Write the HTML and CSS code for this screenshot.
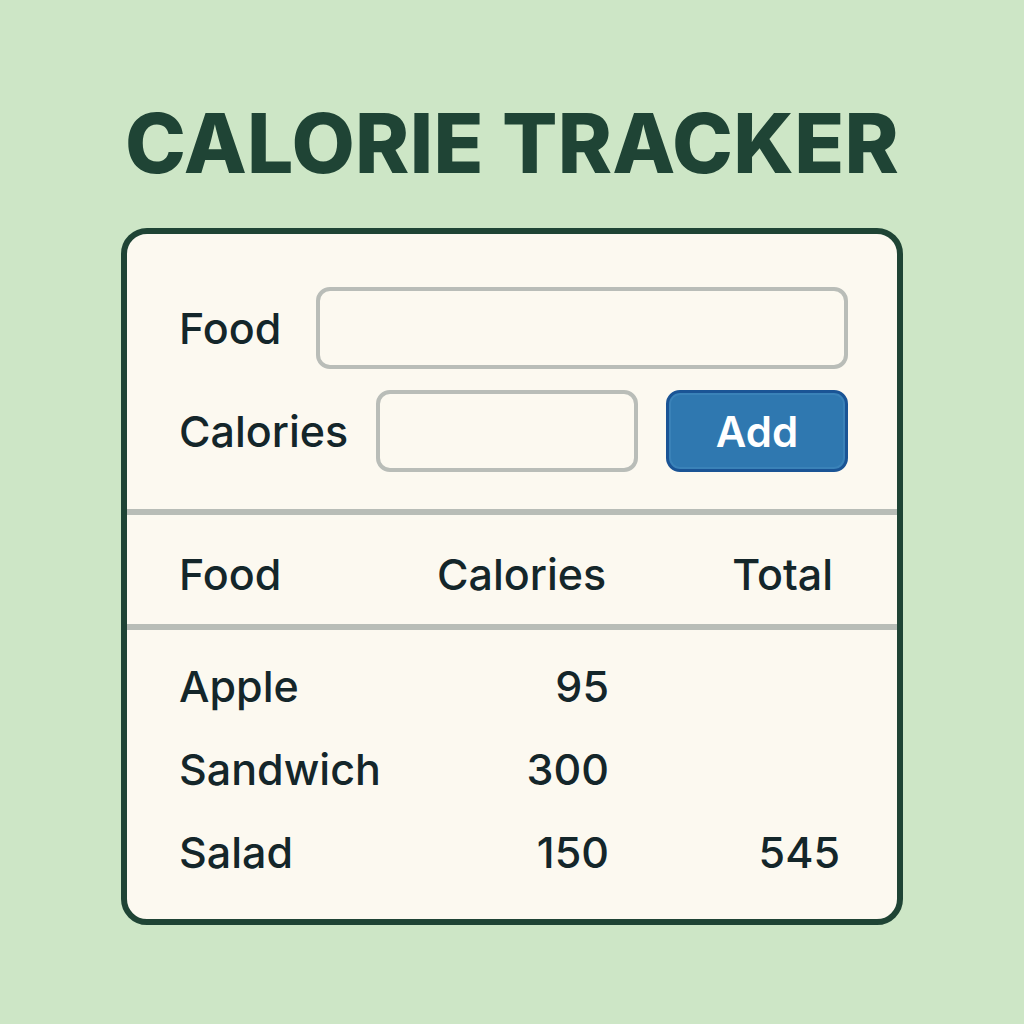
FILE: index.html
```html
<!DOCTYPE html>
<html lang="en">
<head>
<meta charset="utf-8">
<title>Calorie Tracker</title>
<link rel="stylesheet" href="styles.css">
</head>
<body>
<main class="page">
  <h1 class="title">CALORIE TRACKER</h1>
  <section class="card">
    <form class="entry">
      <div class="entry-row">
        <label class="label" for="food">Food</label>
        <input class="field field-food" id="food" type="text">
      </div>
      <div class="entry-row">
        <label class="label" for="cal">Calories</label>
        <input class="field field-cal" id="cal" type="text">
        <button class="add" type="button">Add</button>
      </div>
    </form>
    <div class="table-head">
      <span class="c1">Food</span>
      <span class="c2 head-cal">Calories</span>
      <span class="c3 head-total">Total</span>
    </div>
    <div class="table-body">
      <div class="row"><span class="c1">Apple</span><span class="c2">95</span><span class="c3"></span></div>
      <div class="row"><span class="c1">Sandwich</span><span class="c2">300</span><span class="c3"></span></div>
      <div class="row"><span class="c1">Salad</span><span class="c2">150</span><span class="c3">545</span></div>
    </div>
  </section>
</main>
</body>
</html>
```
FILE: styles.css
```css
* { box-sizing: border-box; }
html, body { margin: 0; padding: 0; }
body {
  background: #cde6c6;
  font-family: Inter, "Liberation Sans", sans-serif;
  color: #14262a;
  width: 1024px;
  height: 1024px;
  overflow: hidden;
}
.page {
  display: flex;
  flex-direction: column;
  align-items: center;
  padding-top: 96px;
}
.title {
  margin: 0;
  font-size: 82px;
  font-weight: 800;
  line-height: 96px;
  letter-spacing: 0.3px;
  color: #1f4435;
  height: 96px;
}
.card {
  margin-top: 36px;
  width: 782px;
  height: 697px;
  background: #fcf9f0;
  border: 6px solid #1f4435;
  border-radius: 26px;
  overflow: hidden;
}
.entry {
  display: flex;
  flex-direction: column;
  gap: 21px;
  padding: 53px 49px 37px 52px;
  border-bottom: 6px solid #b8bdb7;
}
.entry-row {
  display: flex;
  align-items: center;
  height: 82px;
}
.label {
  font-size: 43px;
  font-weight: 500;
}
.field {
  height: 82px;
  border: 4px solid #b9bdb8;
  border-radius: 14px;
  background: #fcf9f0;
  font: inherit;
}
.field-food {
  flex: 1;
  margin-left: 35px;
}
.field-cal {
  width: 262px;
  margin-left: 28px;
}
.add {
  width: 182px;
  height: 82px;
  margin-left: auto;
  background: #2f78b0;
  border: 3px solid #1a5495;
  border-radius: 14px;
  box-shadow: inset 0 0 0 2px #3a82b8;
  color: #ffffff;
  font-family: Inter, "Liberation Sans", sans-serif;
  font-size: 42px;
  font-weight: 600;
  padding: 0;
}
.table-head,
.row {
  display: grid;
  grid-template-columns: 258px 172px 231px;
  align-items: center;
  padding-left: 52px;
  font-size: 43px;
  font-weight: 500;
}
.table-head {
  height: 115px;
  padding-top: 8px;
  border-bottom: 6px solid #b8bdb7;
}
.table-body {
  padding-top: 14px;
}
.row {
  height: 83px;
}
.c2, .c3 { text-align: right; }
.head-cal { text-align: left; }
.head-total { padding-right: 7px; }
```
